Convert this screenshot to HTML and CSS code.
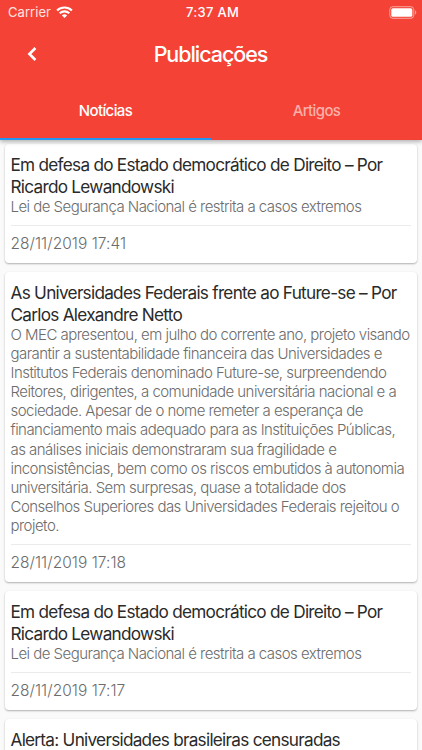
FILE: index.html
```html
<!DOCTYPE html>
<html lang="pt-BR">
<head>
<meta charset="utf-8">
<title>Publicações</title>
<link rel="stylesheet" href="styles.css">
</head>
<body>
<header class="header">
  <div class="status">
    <div class="carrier"><span>Carrier</span>
      <svg class="wifi" viewBox="0 0 17 13" width="17" height="13" fill="none" stroke="#fff" stroke-width="2.1"><path d="M1.1 4.5C5.2.5 11.8.5 15.9 4.5"/><path d="M3.7 7.3c2.7-2.6 6.9-2.6 9.6 0"/><path d="M5.9 9.4c1.5-1.4 3.7-1.4 5.2 0L8.5 12z" fill="#fff" stroke="none"/></svg>
    </div>
    <div class="clock">7:37 AM</div>
    <svg class="battery" viewBox="0 0 28 13" width="28" height="13"><rect x=".8" y=".7" width="24" height="11.6" rx="3" fill="none" stroke="#fff" stroke-opacity=".5"/><rect x="2.3" y="2.2" width="21" height="8.6" rx="1.6" fill="#fff"/><path d="M26 4.5c1.7.5 1.7 3.5 0 4z" fill="#fff" fill-opacity=".5"/></svg>
  </div>
  <div class="bar">
    <svg class="back" viewBox="0 0 10 14" width="10" height="14" fill="none" stroke="#fff" stroke-width="2.6"><path d="M8.4 1 2.4 7l6 6"/></svg>
    <h1 class="heading">Publicações</h1>
  </div>
  <nav class="tabs">
    <div class="tab active">Notícias</div>
    <div class="tab">Artigos</div>
  </nav>
</header>
<main class="list">
  <article class="card">
    <h2 class="title">Em defesa do Estado democrático de Direito – Por<br>Ricardo Lewandowski</h2>
    <p class="text">Lei de Segurança Nacional é restrita a casos extremos</p>
    <div class="date">28/11/2019 17:41</div>
  </article>
  <article class="card">
    <h2 class="title">As Universidades Federais frente ao Future-se – Por<br>Carlos Alexandre Netto</h2>
    <p class="text">O MEC apresentou, em julho do corrente ano, projeto visando<br>garantir a sustentabilidade financeira das Universidades e<br>Institutos Federais denominado Future-se, surpreendendo<br>Reitores, dirigentes, a comunidade universitária nacional e a<br>sociedade. Apesar de o nome remeter a esperança de<br>financiamento mais adequado para as Instituições Públicas,<br>as análises iniciais demonstraram sua fragilidade e<br>inconsistências, bem como os riscos embutidos à autonomia<br>universitária. Sem surpresas, quase a totalidade dos<br>Conselhos Superiores das Universidades Federais rejeitou o<br>projeto.</p>
    <div class="date">28/11/2019 17:18</div>
  </article>
  <article class="card">
    <h2 class="title">Em defesa do Estado democrático de Direito – Por<br>Ricardo Lewandowski</h2>
    <p class="text">Lei de Segurança Nacional é restrita a casos extremos</p>
    <div class="date">28/11/2019 17:17</div>
  </article>
  <article class="card">
    <h2 class="title">Alerta: Universidades brasileiras censuradas</h2>
    <p class="text">&nbsp;</p>
  </article>
</main>
</body>
</html>
```
FILE: styles.css
```css
* { box-sizing: border-box; }
body {
  margin: 0;
  height: 750px;
  overflow: hidden;
  background: #fafafa;
  font-family: Inter, "Liberation Sans", sans-serif;
}
h1, h2, p { margin: 0; font-weight: 400; }
.header {
  position: relative;
  height: 139.5px;
  background: #f44336;
  color: #fff;
  box-shadow: 0 2px 4px rgba(0, 0, 0, .28);
}
.status {
  display: grid;
  grid-template-columns: 1fr auto 1fr;
  align-items: center;
  height: 24px;
  padding: 0 5px 0 8px;
}
.carrier { display: flex; align-items: center; gap: 5px; font-size: 13px; letter-spacing: .05px; color: #ffe3e0; }
.clock { font-size: 13px; font-weight: 500; letter-spacing: .3px; }
.battery { justify-self: end; }
.bar {
  display: grid;
  grid-template-columns: 60px 1fr 60px;
  align-items: center;
  height: 60px;
}
.back { margin-left: 26.5px; }
.heading { text-align: center; font-size: 21.5px; font-weight: 500; letter-spacing: -1.05px; text-indent: -1px; }
.tabs { display: grid; grid-template-columns: 1fr 1fr; height: 55.5px; }
.tab {
  display: flex;
  align-items: center;
  justify-content: center;
  font-size: 15px;
  font-weight: 500;
  letter-spacing: -.62px;
  color: #fbb0aa;
  border-bottom: 2px solid transparent;
}
.tab.active { color: #fff; border-color: #2196f3; }
.list { display: flex; flex-direction: column; gap: 8.5px; padding: 4.5px 5px 0; }
.card {
  flex: none;
  padding: 10.2px 6px 0 5.5px;
  background: #fff;
  border-radius: 4px;
  box-shadow: 0 1px 2px rgba(0, 0, 0, .3);
  white-space: nowrap;
}
.title { font-size: 17.2px; font-weight: 400; line-height: 21.4px; letter-spacing: -.73px; color: #2a2a2a; }
.text { font-size: 15px; font-weight: 300; line-height: 19.1px; letter-spacing: -.53px; color: #6c6c6c; }
.date {
  margin-top: 8.5px;
  height: 38.9px;
  border-top: 1px solid #ebebeb;
  font-size: 15.5px;
  font-weight: 300;
  line-height: 36px;
  letter-spacing: .03px;
  color: #6c6c6c;
}
```
